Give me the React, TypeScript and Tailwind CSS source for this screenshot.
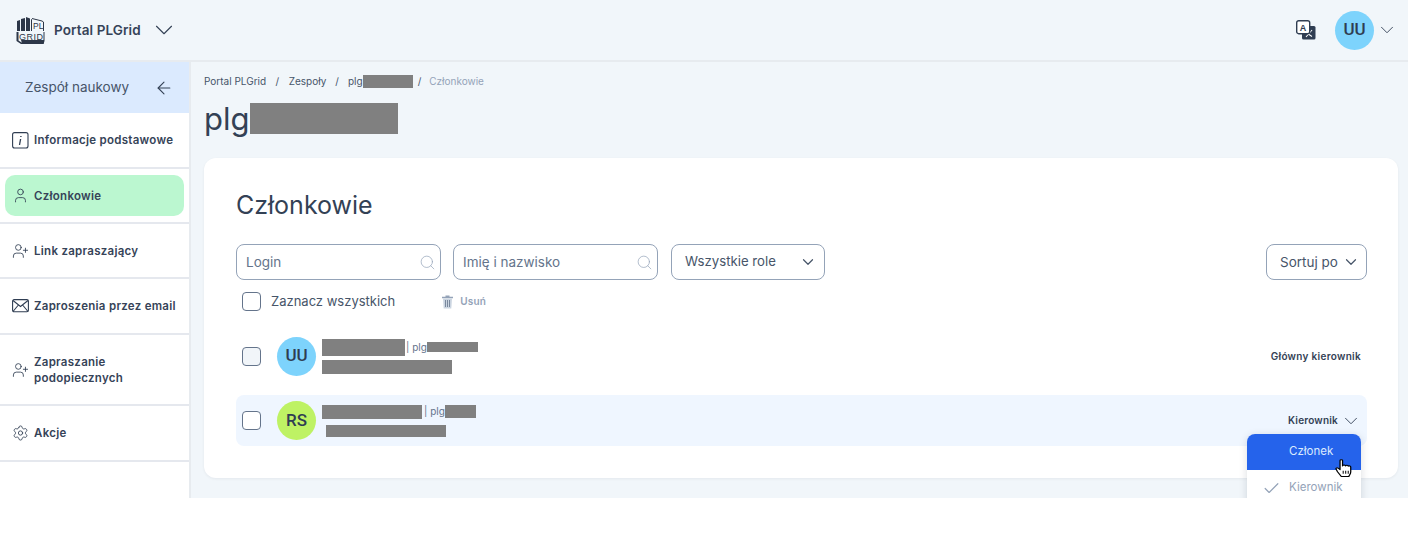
import { ArrowLeft, ChevronDown, Check, Search, Settings, User, UserPlus } from 'lucide-react'
import type { ReactNode } from 'react'

function Redacted({ className }: { className: string }) {
  return <span className={`inline-block shrink-0 bg-[#808080] ${className}`} />
}

function Logo() {
  return (
    <svg width="30" height="28" viewBox="0 0 30 28" aria-hidden>
      <path d="M1 5l3-1v11H1zM5 3l4-1v13H5zM10 1l4 1.500V15h-4zM15 3l1 .5V15h-1z" fill="#2d3748" />
      <path d="M16 2.500l10 2.500 1.500 1v9" fill="none" stroke="#2d3748" strokeWidth="1" />
      <path d="M0.500 16h2v8.500l3 2h21.500l.5-3V16h1v9l-1 3H5L.5 25z" fill="#2d3748" />
      <path d="M5 24h23v3.500H6z" fill="#2d3748" />
      <text x="17" y="13" fontSize="8.500" fill="#2d3748" fontFamily="'Liberation Sans',sans-serif">PL</text>
      <text x="3" y="23.500" fontSize="9" fill="#2d3748" fontFamily="'Liberation Sans',sans-serif" textLength="24">GRID</text>
    </svg>
  )
}

function TranslateIcon() {
  return (
    <svg width="20" height="20" viewBox="0 0 20 20" aria-hidden>
      <rect x="6" y="6" width="13.500" height="13.500" rx="1.500" fill="#2f3d52" />
      <path d="M10 17l6-7M10.500 11c1.200 2.500 3 4.200 5.500 5.500" stroke="#fff" strokeWidth="1.100" fill="none" />
      <rect x="0.700" y="0.700" width="13" height="13" rx="2" fill="#fff" stroke="#2f3d52" strokeWidth="1.400" />
      <text x="3.800" y="10.500" fontSize="9" fontWeight="700" fill="#2f3d52" fontFamily="'Liberation Sans',sans-serif">A</text>
    </svg>
  )
}

function InfoSquareIcon() {
  return (
    <svg width="17" height="17" viewBox="0 0 17 17" fill="none" stroke="#2f3d52" aria-hidden>
      <rect x="0.600" y="0.600" width="15.400" height="15.400" rx="2" strokeWidth="1.100" />
      <path d="M8.900 4v1" strokeWidth="1.400" />
      <path d="M8.600 7l-1.100 6" strokeWidth="1.300" />
    </svg>
  )
}

function MailIcon() {
  return (
    <svg width="17" height="14" viewBox="0 0 17 14" fill="none" stroke="#2f3d52" strokeWidth="1.100" aria-hidden>
      <rect x="0.600" y="0.600" width="15.800" height="12.200" rx="1.500" />
      <path d="M1 1.500l7.500 6 7.500-6M1 12.500l5.400-6.500M16 12.500l-5.400-6.500" />
    </svg>
  )
}

function TrashIcon() {
  return (
    <svg width="13" height="14" viewBox="0 0 13 14" aria-hidden>
      <path d="M1 1.800h11v1.400H1z M4.500 1.800V.5h4v1.300z" fill="#94a3b8" />
      <path d="M2 3.500h9l-.7 10H2.700z" fill="#cbd5e1" />
      <path d="M4.500 5v7M6.500 5v7M8.500 5v7" stroke="#64748b" strokeWidth="0.800" />
    </svg>
  )
}

function HandCursor() {
  return (
    <svg
      width="17"
      height="18"
      viewBox="0 0 13.500 17"
      preserveAspectRatio="none"
      className="absolute left-[88px] top-[25px]"
      aria-hidden
    >
      <path
        d="M4 1.500c0-1 2-1 2 0v5c.5-1 2-1 2.300 0 .500-.8 2-.7 2.200.3.600-.6 2-.3 2 .8V12c0 2-1 3-1.500 4.500h-6L2 12 .8 9.500c-.3-1 1-1.500 1.700-.8L4 10z"
        fill="#fff"
        stroke="#000"
        strokeWidth="1"
        strokeLinejoin="round"
      />
      <path d="M6.500 11v3M8.500 11v3M10.500 11v3" stroke="#000" strokeWidth="0.800" />
    </svg>
  )
}

function NavItem({ icon, label, className, active }: { icon: ReactNode; label: ReactNode; className: string; active?: boolean }) {
  return (
    <div className={`flex border-b-2 border-[#e5e8ee] px-[5px] ${className}`}>
      <div className={`flex w-full items-center rounded-[10px] pl-[7px] ${active ? 'my-[6px] bg-[#bbf7d0]' : ''}`}>
        <span className="flex w-[17px] shrink-0 items-center justify-center text-[#2f3d52]">{icon}</span>
        <span className="ml-[5px] text-[11.500px] font-semibold leading-[16px] tracking-[0.28px] text-[#364358]">{label}</span>
      </div>
    </div>
  )
}

function FilterInput({ placeholder }: { placeholder: string }) {
  return (
    <div className="flex h-9 w-[205px] items-center justify-between rounded-lg border border-[#94a3b8] bg-white pl-[9px] pr-[4px]">
      <span className="text-[13.500px] text-[#64748b]">{placeholder}</span>
      <Search size={17} strokeWidth={1} className="text-[#94a3b8]" />
    </div>
  )
}

export default function App() {
  return (
    <div className="h-[498px] overflow-hidden bg-[#f1f6fa] font-['Inter',sans-serif] text-[#334155]">
      <header className="flex h-[62px] items-center justify-between border-b-2 border-[#e7ebef] pl-[16px] pr-[10px]">
        <div className="flex items-center">
          <Logo />
          <span className="ml-[8px] text-[13.500px] font-semibold tracking-[0.1px] text-[#364358]">Portal PLGrid</span>
          <ChevronDown size={30} strokeWidth={0.900} className="ml-[8px]" />
        </div>
        <div className="flex items-center">
          <TranslateIcon />
          <div className="ml-[19px] flex h-[39px] w-[39px] items-center justify-center rounded-full bg-[#7dd3fc] font-['Roboto',sans-serif] text-[17px] font-medium text-[#2f3d52]">
            UU
          </div>
          <ChevronDown size={22} strokeWidth={1} className="ml-[2px]" />
        </div>
      </header>

      <div className="flex">
        <aside className="h-[436px] w-[191px] shrink-0 border-r-2 border-[#e7ebef] bg-white">
          <div className="flex h-[51px] items-center justify-between bg-[#dbeafe] pl-[25px] pr-[15px]">
            <span className="text-[13.500px] text-[#475569]">Zespół naukowy</span>
            <ArrowLeft size={20} strokeWidth={1.300} />
          </div>
          <NavItem className="h-[56px]" icon={<InfoSquareIcon />} label="Informacje podstawowe" />
          <NavItem className="h-[55px]" active icon={<User size={17} strokeWidth={1.200} />} label="Członkowie" />
          <NavItem className="h-[55px]" icon={<UserPlus size={18} strokeWidth={1.200} />} label="Link zapraszający" />
          <NavItem className="h-[56px]" icon={<MailIcon />} label="Zaproszenia przez email" />
          <NavItem className="h-[71px]" icon={<UserPlus size={18} strokeWidth={1.200} />} label={<>Zapraszanie<br />podopiecznych</>} />
          <NavItem className="h-[56px]" icon={<Settings size={18} strokeWidth={1.200} />} label="Akcje" />
        </aside>

        <main className="min-w-0 flex-1 pl-[13px] pr-[10px] pt-[11px]">
          <nav className="flex h-4 items-center text-[10px] text-[#475569]">
            <span>Portal PLGrid</span>
            <span className="mx-[9.500px]">/</span>
            <span>Zespoły</span>
            <span className="mx-[9px]">/</span>
            <span>plg</span>
            <Redacted className="h-[13px] w-[50px]" />
            <span className="mx-[5px]">/</span>
            <span className="ml-[3px] text-[#94a3b8]">Członkowie</span>
          </nav>
          <div className="mt-[14px] flex h-[31px] items-center">
            <span className="text-[31px] leading-none">plg</span>
            <Redacted className="h-[31px] w-[148px]" />
          </div>

          <section className="relative mt-[24px] h-[320px] rounded-xl bg-white pl-[32px] pr-[31px] pt-[30px] shadow-[0_1px_3px_rgba(15,23,42,0.06)]">
            <h2 className="text-[25px] leading-[34px] text-[#334155]">Członkowie</h2>

            <div className="mt-[22px] flex items-center gap-3">
              <FilterInput placeholder="Login" />
              <FilterInput placeholder="Imię i nazwisko" />
              <div className="ml-px flex h-9 w-[154px] items-center justify-between rounded-lg border border-[#94a3b8] pl-[13px] pr-[7px]">
                <span className="text-[13.200px] text-[#475569]">Wszystkie role</span>
                <ChevronDown size={18} strokeWidth={1.600} className="text-[#475569]" />
              </div>
              <div className="ml-auto flex h-9 w-[101px] items-center justify-between rounded-lg border border-[#94a3b8] pl-[13px] pr-[6px]">
                <span className="text-[13.500px] text-[#475569]">Sortuj po</span>
                <ChevronDown size={18} strokeWidth={1.600} className="text-[#475569]" />
              </div>
            </div>

            <div className="mt-[12px] flex h-[19px] items-center pl-[6px]">
              <span className="h-[19px] w-[19px] rounded border border-[#64748b]" />
              <span className="ml-[10px] text-[13px] text-[#475569]">Zaznacz wszystkich</span>
              <span className="ml-[46px] flex"><TrashIcon /></span>
              <span className="ml-[6px] text-[10px] font-semibold tracking-[0.2px] text-[#94a3b8]">Usuń</span>
            </div>

            <div className="mt-[20px] flex h-[50px] items-center pl-[6px] pr-[6px]">
              <span className="h-[19px] w-[19px] rounded border border-[#64748b] bg-[#f1f5f9]" />
              <div className="ml-[16px] flex h-[39px] w-[39px] items-center justify-center rounded-full bg-[#7dd3fc] font-['Roboto',sans-serif] text-[17px] font-medium text-[#2f3d52]">
                UU
              </div>
              <div className="ml-[6px] flex flex-col">
                <div className="flex items-center text-[10px] text-[#64748b]">
                  <Redacted className="h-[17px] w-[83px]" />
                  <span className="ml-[1px]">| plg</span>
                  <Redacted className="h-[10px] w-[51px]" />
                </div>
                <Redacted className="mt-[4px] h-[14px] w-[130px]" />
              </div>
              <span className="ml-auto text-[10px] font-semibold tracking-[0.3px] text-[#334155]">Główny kierownik</span>
            </div>

            <div className="relative mt-[14px] flex h-[51px] items-center rounded-lg bg-[#eff6ff] pl-[6px] pr-[5px]">
              <span className="h-[19px] w-[19px] rounded border border-[#64748b] bg-white" />
              <div className="ml-[16px] flex h-[39px] w-[39px] items-center justify-center rounded-full bg-[#bef264] font-['Roboto',sans-serif] text-[17px] font-medium text-[#2f3d52]">
                RS
              </div>
              <div className="ml-[6px] flex flex-col">
                <div className="flex items-center text-[10px] text-[#64748b]">
                  <Redacted className="h-[14px] w-[100px]" />
                  <span className="ml-[2px]">| plg</span>
                  <Redacted className="h-[13px] w-[31px]" />
                </div>
                <Redacted className="ml-[4px] mt-[6px] h-[12px] w-[120px]" />
              </div>
              <span className="ml-auto text-[10px] font-semibold tracking-[0.2px] text-[#334155]">Kierownik</span>
              <ChevronDown size={22} strokeWidth={1} className="ml-[2px]" />

              <div className="absolute right-[6px] top-[39px] z-10 w-[114px] rounded-t-lg bg-white shadow-[0_2px_8px_rgba(15,23,42,0.15)]">
                <div className="flex h-[36px] items-center rounded-t-lg bg-[#2563eb] pl-[42px] text-[11.500px] text-[#dbeafe]">Członek</div>
                <div className="flex h-[36px] items-center pl-[15px] text-[11.500px] text-[#94a3b8]">
                  <Check size={19} strokeWidth={1.500} />
                  <span className="ml-[8px]">Kierownik</span>
                </div>
                <HandCursor />
              </div>
            </div>
          </section>
        </main>
      </div>
    </div>
  )
}
